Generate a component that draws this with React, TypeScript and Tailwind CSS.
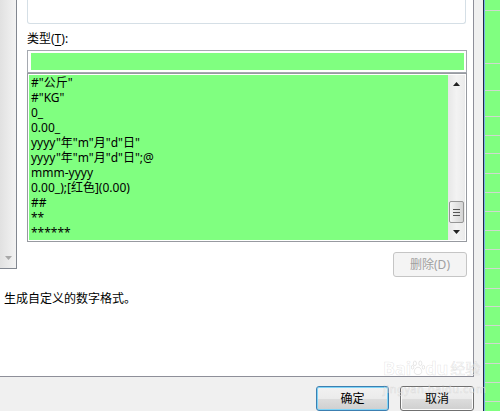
import React from "react";

const formats = [
  '#"公斤"',
  '#"KG"',
  "0_",
  "0.00_",
  'yyyy"年"m"月"d"日"',
  'yyyy"年"m"月"d"日";@',
  "mmm-yyyy",
  "0.00_);[红色](0.00)",
  "##",
  "**",
  "******",
];

// row heights of the sheet strip on the right edge
const sheetRows = [
  "h-[11px]",
  "h-[53px]",
  "h-[27px]",
  "h-[26px]",
  "h-[19px]",
  "h-[18px]",
  "h-[20px]",
  "h-[19px]",
  "h-[19px]",
  "h-[19px]",
  "h-[19px]",
  "h-[19px]",
  "h-[20px]",
  "h-[18px]",
  "h-[19px]",
  "h-[18px]",
  "h-[20px]",
  "h-[19px]",
  "h-[19px]",
  "h-[20px]",
];

function Arrow({ up, color = "#222" }: { up?: boolean; color?: string }) {
  return (
    <svg width="7" height="4" viewBox="0 0 7 4" aria-hidden="true">
      {up ? (
        <path d="M3.5 0 L7 4 L0 4 Z" fill={color} />
      ) : (
        <path d="M0 0 L7 0 L3.5 4 Z" fill={color} />
      )}
    </svg>
  );
}

function WinButton({
  label,
  focused,
  className = "",
}: {
  label: string;
  focused?: boolean;
  className?: string;
}) {
  return (
    <button
      className={`flex h-[25px] items-center justify-center rounded-[3px] border text-[12px] text-black bg-[linear-gradient(to_bottom,#f2f2f2_0%,#ebebeb_50%,#dddddd_51%,#cfcfcf_100%)] ${
        focused
          ? "border-[#3c7fb1] shadow-[inset_0_0_0_1px_#7fd4f7]"
          : "border-[#707070] shadow-[inset_0_0_0_1px_#fcfcfc]"
      } ${className}`}
    >
      {label}
    </button>
  );
}

export default function App() {
  return (
    <div className="relative flex h-[411px] w-[500px] overflow-hidden bg-[#f0f0f0] font-['Noto_Sans','Noto_Sans_CJK_SC',sans-serif] text-[12px] text-black">
      <div className="flex w-[483px] flex-col">
        {/* tab page */}
        <div className="flex h-[377px] w-[474px] flex-col border-r border-b border-[#8e8f99] bg-white">
          <div className="flex h-[278px] items-start">
            {/* category list scrollbar */}
            <div className="flex h-[269px] w-[17px] flex-col items-center justify-end border-r border-b border-[#828790] bg-gradient-to-r from-[#e1e1e1] to-[#f3f3f3] pb-[8px]">
              <Arrow color="#a8a8a8" />
            </div>

            <div className="ml-[10px] flex w-[440px] flex-col">
              <div className="h-[24px] w-[439px] rounded-b-[3px] border-x border-b border-[#d5dfe6]" />

              <div className="mt-[7px] h-[16px] leading-[16px]">
                类型(<span className="underline underline-offset-2">T</span>):
              </div>

              <div className="mt-[3px] h-[23px] border border-[#a5a9b0] bg-white pt-[2px] pr-[2px] pb-[2px] pl-[3px]">
                <div className="h-[17px] bg-[#80ff80]" />
              </div>

              <div className="flex h-[169px] border border-[#979aa0] bg-white p-[1px]">
                <div className="flex w-[419px] flex-col bg-[#80ff80] pl-[2px]">
                  {formats.map((f) => (
                    <div key={f} className="h-[15px] leading-[15px] whitespace-pre">
                      {f}
                    </div>
                  ))}
                </div>
                <div className="flex w-[17px] flex-col items-center bg-gradient-to-r from-[#e7e7e7] via-[#f3f3f3] to-[#ebebeb]">
                  <div className="flex h-[17px] items-center justify-center">
                    <Arrow up />
                  </div>
                  <div className="flex-1" />
                  <div className="flex h-[22px] w-[15px] flex-col items-center justify-center gap-[2px] rounded-[2px] border border-[#969696] bg-gradient-to-r from-[#f5f5f5] to-[#d4d4d4]">
                    <div className="h-px w-[7px] bg-[#555]" />
                    <div className="h-px w-[7px] bg-[#555]" />
                    <div className="h-px w-[7px] bg-[#555]" />
                  </div>
                  <div className="flex h-[17px] items-center justify-center">
                    <Arrow />
                  </div>
                </div>
              </div>

              <button className="mt-[10px] flex h-[25px] w-[74px] items-center justify-center self-end rounded-[3px] border border-[#c5c5c5] bg-[#f4f4f4] text-[12px] text-[#a0a0a0]">
                删除(D)
              </button>
            </div>
          </div>

          <p className="mt-[13px] pl-[4px] leading-[16px]">生成自定义的数字格式。</p>
        </div>

        {/* button bar */}
        <div className="flex justify-end gap-[11px] pt-[9px] pr-[9px]">
          <WinButton label="确定" focused className="w-[73px]" />
          <WinButton label="取消" className="w-[74px]" />
        </div>
      </div>

      {/* sheet behind the dialog */}
      <div className="w-px bg-[#1d2c48]" />
      <div className="w-px bg-[#79b4e4]" />
      <div className="flex flex-1 flex-col bg-[#80ff80]">
        {sheetRows.map((h, i) => (
          <div key={i} className={`${h} shrink-0 border-b border-[#cfd8cf]`} />
        ))}
      </div>

      {/* watermark */}
      <div className="pointer-events-none absolute top-[357px] left-[383px] flex flex-col items-start whitespace-nowrap text-white/50 [-webkit-text-stroke:0.6px_rgba(170,170,170,0.3)]">
        <div className="flex items-center text-[18px] leading-[22px] font-bold">
          Bai
          <svg width="14" height="16" viewBox="0 0 18 20" aria-hidden="true">
            <g fill="rgba(255,255,255,0.5)" stroke="rgba(170,170,170,0.35)">
              <ellipse cx="5" cy="4" rx="2" ry="3" />
              <ellipse cx="12" cy="4" rx="2" ry="3" />
              <ellipse cx="2" cy="9" rx="1.6" ry="2.4" />
              <ellipse cx="16" cy="9" rx="1.6" ry="2.4" />
              <path d="M9 9 C5 9 3 15 5 17 C7 19 11 19 13 17 C15 15 13 9 9 9 Z" />
            </g>
          </svg>
          du
          <span className="ml-[2px] text-[15px] font-normal">经验</span>
        </div>
        <div className="mt-[3px] text-[11px] leading-[13px] tracking-[0.5px]">jingyan.baidu.com</div>
      </div>
    </div>
  );
}
